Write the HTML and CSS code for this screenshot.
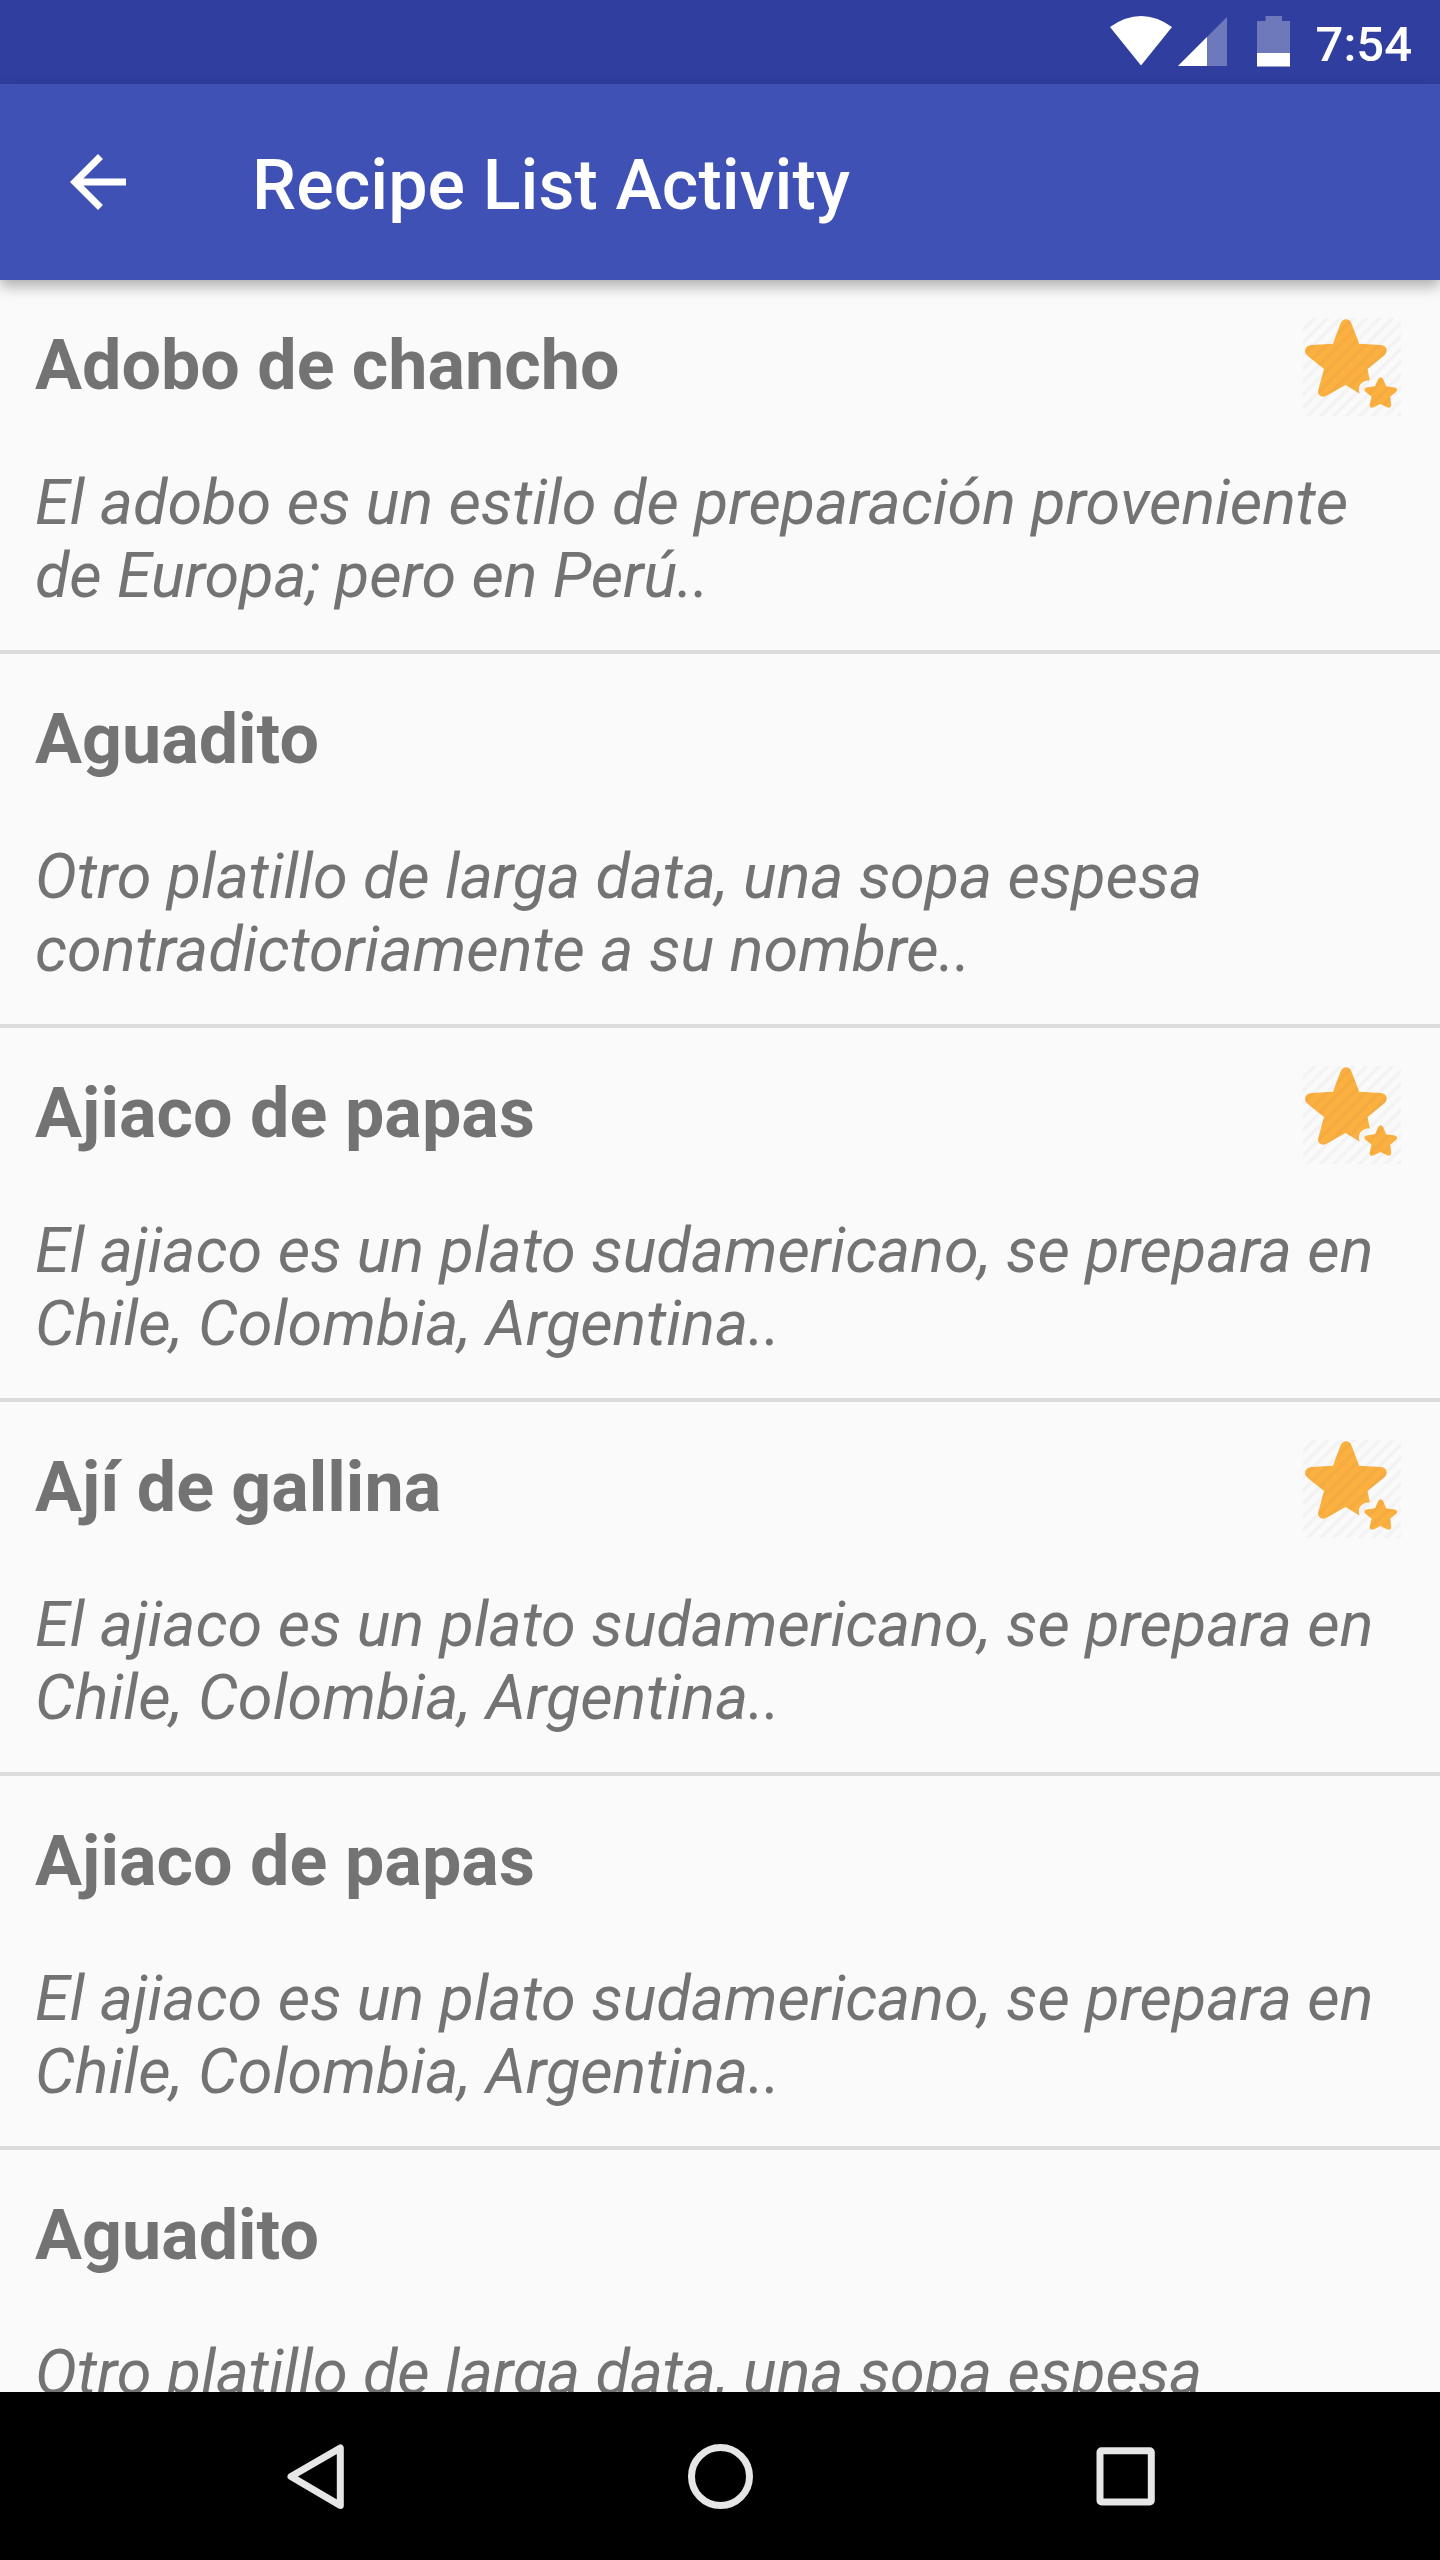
FILE: index.html
```html
<!DOCTYPE html>
<html lang="es">
<head>
<meta charset="utf-8">
<title>Recipe List Activity</title>
<link rel="stylesheet" href="styles.css">
</head>
<body>
<svg width="0" height="0" class="defs" aria-hidden="true">
  <defs>
    <pattern id="stripes" width="9.2" height="9.2" patternUnits="userSpaceOnUse" patternTransform="translate(2 0) rotate(45)">
      <rect width="3.6" height="9.2" fill="#555" fill-opacity=".045"/>
    </pattern>
    <symbol id="star" viewBox="0 0 105 105">
      <path d="M40.300 9Q42 4.300 46 4.300Q50 4.300 51.700 9L59.200 28.700L81 30C87 30.600 88.500 36.800 84.500 40.300L67.500 54L69.800 65.300C62 65.500 57 70.500 59.500 78.500L45.500 70L26.500 80.800C22 83.500 17 80 18.300 75L24 54L7.500 40.800C3 36.500 5 30.500 11.500 30L33 28.700Z" fill="#fbb040"/>
      <path d="M78.300 63.800Q80.600 60.500 83 63.800L86.300 71.600L94 72.300Q99 73.500 96 77L90.200 81.500L91.200 89.500Q91 93.800 87 92.300L80.500 89L74 92.300Q69.300 93.800 69.800 89.500L71.500 81.500L65.400 76.800Q62.500 73.200 67.500 72.300L75 71.300Z" fill="#fbb040"/>
      <rect x="3" y="3" width="98" height="98" fill="url(#stripes)"/>
    </symbol>
  </defs>
</svg>
<div class="screen">
  <div class="status-bar">
    <svg class="status-icons" width="180" height="51" viewBox="0 0 180 51">
      <path d="M0 11Q31-11 62 11L31 49.500Z" fill="#fff"/>
      <path d="M117 1V50H68Z" fill="#fff" fill-opacity=".3"/>
      <path d="M97 21V50H68Z" fill="#fff"/>
      <path d="M155.500 0H172V5H180V37H147V5H155.500Z" fill="#fff" fill-opacity=".3"/>
      <path d="M147 37H180V50.500H147Z" fill="#fff"/>
    </svg>
    <span class="clock">7:54</span>
  </div>
  <header class="app-bar">
    <svg class="back" width="84" height="84" viewBox="0 0 24 24"><path d="M20 11H7.830l5.590-5.590L12 4l-8 8 8 8 1.410-1.410L7.830 13H20v-2z" fill="#fff"/></svg>
    <h1 class="app-title">Recipe List Activity</h1>
  </header>
  <main class="list">
    <article class="item">
      <div class="text"><h2 class="name">Adobo de chancho</h2>
      <p class="desc"><span class="snug">El adobo es un estilo de preparación proveniente</span><br><span class="tight">de Europa; pero en Perú..</span></p></div>
      <svg class="fav"><use href="#star"/></svg>
    </article>
    <article class="item">
      <div class="text"><h2 class="name">Aguadito</h2>
      <p class="desc"><span class="tight">Otro platillo de larga data, una sopa espesa</span><br>contradictoriamente a su nombre..</p></div>
    </article>
    <article class="item">
      <div class="text"><h2 class="name loose">Ajiaco de papas</h2>
      <p class="desc"><span class="snug">El ajiaco es un plato sudamericano, se prepara en</span><br>Chile, Colombia, Argentina..</p></div>
      <svg class="fav"><use href="#star"/></svg>
    </article>
    <article class="item">
      <div class="text"><h2 class="name">Ají de gallina</h2>
      <p class="desc"><span class="snug">El ajiaco es un plato sudamericano, se prepara en</span><br>Chile, Colombia, Argentina..</p></div>
      <svg class="fav"><use href="#star"/></svg>
    </article>
    <article class="item">
      <div class="text"><h2 class="name loose">Ajiaco de papas</h2>
      <p class="desc"><span class="snug">El ajiaco es un plato sudamericano, se prepara en</span><br>Chile, Colombia, Argentina..</p></div>
    </article>
    <article class="item">
      <div class="text"><h2 class="name">Aguadito</h2>
      <p class="desc"><span class="tight">Otro platillo de larga data, una sopa espesa</span></p></div>
    </article>
  </main>
  <nav class="nav-bar">
    <svg width="70" height="70" viewBox="0 0 70 70"><path d="M60.300 7V64.500L11 35.500Z" fill="none" stroke="#e6e6e6" stroke-width="7" stroke-linejoin="round"/></svg>
    <svg width="70" height="70" viewBox="0 0 70 70"><circle cx="35.500" cy="35.500" r="29" fill="none" stroke="#e6e6e6" stroke-width="7"/></svg>
    <svg width="70" height="70" viewBox="0 0 70 70"><rect x="10" y="9.700" width="51.300" height="51.300" rx="1.500" fill="none" stroke="#e6e6e6" stroke-width="7"/></svg>
  </nav>
</div>
</body>
</html>
```
FILE: styles.css
```css
* { box-sizing: border-box; margin: 0; padding: 0; }
body { background: #fafafa; font-family: Roboto, "Noto Sans", sans-serif; }
svg { display: block; flex: none; }
.defs { position: absolute; }
.screen { display: flex; flex-direction: column; width: 1440px; height: 2560px; overflow: hidden; }
.status-bar {
  display: flex; flex: none; align-items: flex-start; justify-content: flex-end;
  height: 84px; padding: 16px 28px 0 0; background: #303f9f;
}
.status-icons { margin-right: 26px; }
.clock { font-size: 49px; line-height: 57px; font-weight: 500; color: #fff; }
.app-bar {
  display: flex; flex: none; align-items: center; gap: 112px; z-index: 1;
  height: 196px; padding-left: 56px; background: #3f51b5;
  box-shadow: 0 6px 14px rgba(0, 0, 0, .32);
}
.app-title { padding-top: 5px; font-size: 70px; line-height: 82px; font-weight: 500; letter-spacing: .07px; color: #fff; white-space: nowrap; }
.list { flex: 1; min-height: 0; overflow: hidden; background: #fafafa; color: #737373; }
.item { display: flex; justify-content: space-between; height: 374px; padding: 35px 35px 0; border-bottom: 4px solid #dcdcdc; }
.text { flex: 1; min-width: 0; padding-top: 9px; white-space: nowrap; }
.name { font-size: 70px; line-height: 82px; font-weight: 700; }
.desc { margin-top: 60px; font-size: 63px; line-height: 73px; font-style: italic; }
.loose { letter-spacing: .07px; }
.snug { letter-spacing: -.07px; }
.tight { letter-spacing: -.13px; }
.fav { width: 105px; height: 105px; margin-left: -105px; }
.nav-bar { display: flex; flex: none; align-items: center; justify-content: center; gap: 335px; height: 168px; background: #000; }
```
